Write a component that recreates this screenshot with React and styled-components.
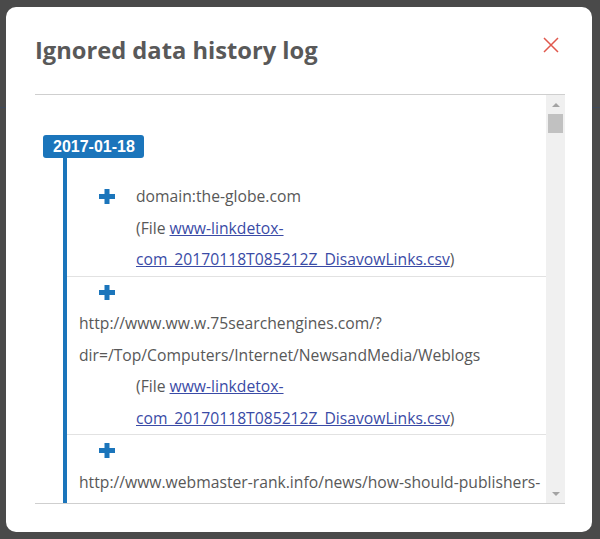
import React from 'react';
import styled, { createGlobalStyle } from 'styled-components';

const GlobalStyle = createGlobalStyle`
  html, body {
    margin: 0;
    padding: 0;
  }
  body {
    font-family: 'Open Sans', 'Noto Sans', sans-serif;
    background:
      linear-gradient(to bottom, transparent 107px, #3e4a5c 107px, #3e4a5c 108px, transparent 108px),
      #4a4a4a;
  }
`;

const Page = styled.div`
  box-sizing: border-box;
  height: 539px;
  padding: 7px 8px 7px 6px;
`;

const Modal = styled.div`
  box-sizing: border-box;
  width: 586px;
  height: 525px;
  background: #fff;
  border-radius: 10px;
  padding: 0 27px 28px 29px;
  display: flex;
  flex-direction: column;
`;

const Header = styled.div`
  display: flex;
  justify-content: space-between;
  align-items: flex-start;
  height: 88px;
  padding-top: 27px;
  box-sizing: border-box;
  border-bottom: 1px solid #cfcfcf;
  flex: none;
`;

const Title = styled.h2`
  margin: 0;
  font-size: 23.7px;
  line-height: 32px;
  font-weight: 700;
  color: #595959;
`;

const CloseButton = styled.button`
  border: 0;
  background: none;
  padding: 0;
  margin: 3px 6px 0 0;
  width: 16px;
  height: 16px;
  cursor: pointer;
  display: block;
`;

const Body = styled.div`
  flex: 1;
  min-height: 0;
  display: flex;
  border-bottom: 1px solid #cfcfcf;
`;

const Viewport = styled.div`
  flex: 1;
  min-width: 0;
  overflow: hidden;
  padding-top: 40px;
`;

const ScrollTrack = styled.div`
  width: 19px;
  flex: none;
  background: #f0f0f0;
  display: flex;
  flex-direction: column;
`;

const ScrollButton = styled.div`
  height: 19px;
  display: flex;
  align-items: center;
  justify-content: center;
  flex: none;
`;

const ScrollThumb = styled.div`
  height: 19px;
  margin: 0 2px;
  background: #c1c1c1;
  flex: none;
`;

const ScrollSpacer = styled.div`
  flex: 1;
`;

const Badge = styled.span`
  display: inline-block;
  margin-left: 8px;
  height: 23px;
  line-height: 23px;
  padding: 0 9px 0 10px;
  border-radius: 3px;
  background: #1b75bb;
  color: #fff;
  font-family: 'Liberation Sans', Arial, sans-serif;
  font-weight: 700;
  font-size: 16px;
  vertical-align: top;
`;

const Timeline = styled.ul`
  list-style: none;
  margin: 0 0 0 28px;
  padding: 23px 0 0;
  border-left: 4px solid #1b75bb;
`;

const Entry = styled.li`
  padding-left: 12px;
  border-bottom: 1px solid #e2e2e2;
  font-size: 15.7px;
  line-height: 31.5px;
  color: #585858;
`;

const PlusIcon = styled.svg`
  display: inline-block;
  width: 16px;
  height: 15px;
  margin: 0 21px 0 20px;
  vertical-align: -2px;
`;

const Value = styled.span`
  display: inline-block;
  max-width: 100%;
  vertical-align: top;
`;

const FileInfo = styled.div`
  margin-left: 57px;
`;

const FileLink = styled.a`
  color: #3a4ba6;
  text-decoration: underline;
`;

const file = 'www-linkdetox-com_20170118T085212Z_DisavowLinks.csv';

const entries = [
  { value: 'domain:the-globe.com', file },
  { value: 'http://www.ww.w.75searchengines.com/?dir=/Top/Computers/Internet/NewsandMedia/Weblogs', file },
  { value: 'http://www.webmaster-rank.info/news/how-should-publishers-respond-to-penguin/', file },
];

const Plus = () => (
  <PlusIcon viewBox="0 0 16 15">
    <rect x="5.5" y="0" width="5" height="15" fill="#1b75bb" />
    <rect x="0" y="5" width="16" height="5" fill="#1b75bb" />
  </PlusIcon>
);

const Arrow = ({ down }) => (
  <svg width="8" height="4" viewBox="0 0 8 4">
    <path d={down ? 'M0 0L8 0L4 4Z' : 'M0 4L4 0L8 4Z'} fill="#a3a3a3" />
  </svg>
);

export default function App() {
  return (
    <>
      <GlobalStyle />
      <Page>
        <Modal>
          <Header>
            <Title>Ignored data history log</Title>
            <CloseButton aria-label="Close">
              <svg width="16" height="16" viewBox="0 0 16 16">
                <path d="M1 1L15 15M15 1L1 15" stroke="#e0584d" strokeWidth="1.5" fill="none" />
              </svg>
            </CloseButton>
          </Header>
          <Body>
            <Viewport>
              <Badge>2017-01-18</Badge>
              <Timeline>
                {entries.map((item, i) => (
                  <Entry key={i}>
                    <Plus />
                    <Value>{item.value}</Value>
                    <FileInfo>
                      (File <FileLink href="#">{item.file}</FileLink>)
                    </FileInfo>
                  </Entry>
                ))}
              </Timeline>
            </Viewport>
            <ScrollTrack>
              <ScrollButton>
                <Arrow />
              </ScrollButton>
              <ScrollThumb />
              <ScrollSpacer />
              <ScrollButton>
                <Arrow down />
              </ScrollButton>
            </ScrollTrack>
          </Body>
        </Modal>
      </Page>
    </>
  );
}
